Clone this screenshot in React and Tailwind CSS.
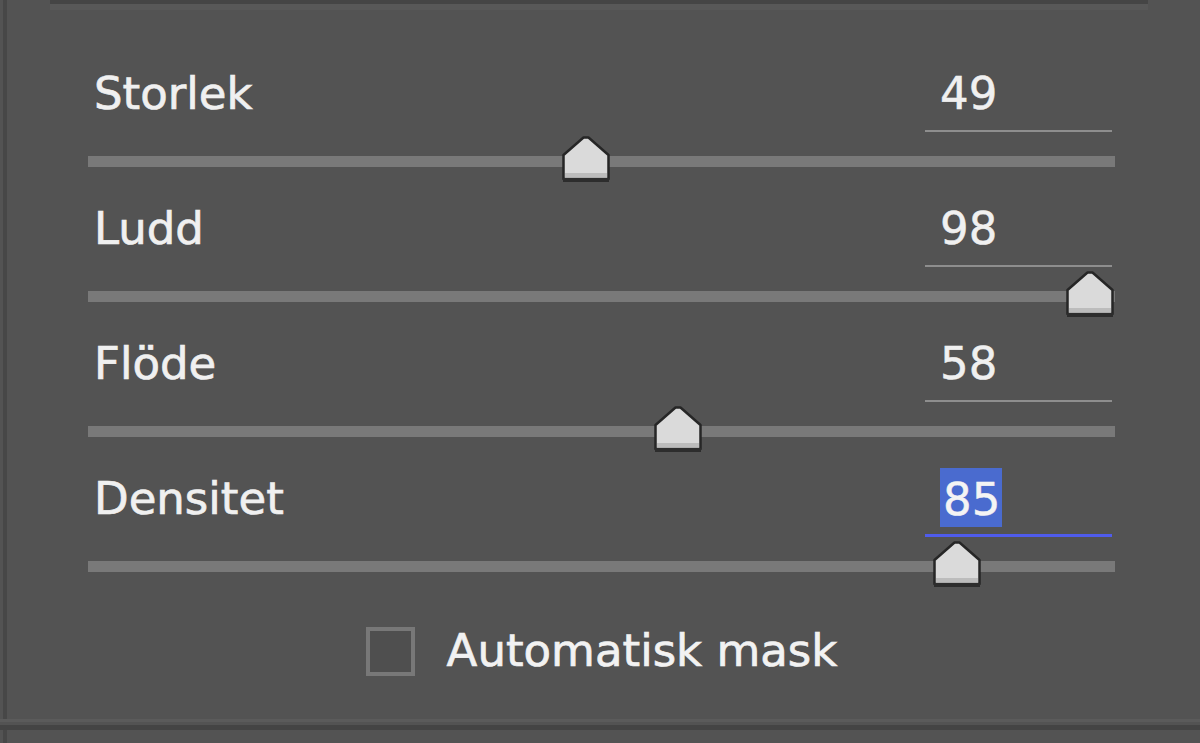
import React from "react";

const sliders = [
  { label: "Storlek", value: 49 },
  { label: "Ludd", value: 98 },
  { label: "Flöde", value: 58 },
  { label: "Densitet", value: 85, focused: true },
];

// house-shaped slider handle, like the old Photoshop sliders
const Thumb = ({ value }) => (
  <svg
    width="50"
    height="46"
    viewBox="0 0 50 46"
    className="absolute top-[-20px]"
    style={{ left: `${value * 10.3 - 32}px` }}
  >
    <polygon
      points="22.5,1.5 27.5,1.5 47.5,19 47.5,43 2.5,43 2.5,19"
      fill="#dadada"
      stroke="#262626"
      strokeWidth="2.5"
      strokeLinejoin="round"
    />
    <rect x="4" y="37" width="42" height="4" fill="#bcbcbc" />
    <rect x="2" y="42" width="46" height="4" fill="#2d2d2d" />
  </svg>
);

const SliderRow = ({ label, value, focused }) => (
  <div className="h-[135px]">
    <div className="flex items-start justify-between h-[64px]">
      <span className="ml-[6px] text-[45px] leading-[52px] text-[#f0f0f0] [-webkit-text-stroke:0.7px_#f0f0f0]">
        {label}
      </span>
      <div
        className={
          focused
            ? "w-[187px] h-[64px] mr-[3px] pl-[15px] border-b-[3px] border-[#4f5cec]"
            : "w-[187px] h-[64px] mr-[3px] pl-[15px] border-b-2 border-[#8e8e8e]"
        }
      >
        {focused ? (
          <span className="inline-block -mt-[5px] pt-[5px] pl-[3px] pr-[2px] bg-[#4a6bcf] text-[45px] leading-[54px] text-[#f4f4f4] [-webkit-text-stroke:0.5px_#f4f4f4]">
            {value}
          </span>
        ) : (
          <span className="text-[45px] leading-[52px] text-[#f0f0f0] [-webkit-text-stroke:0.5px_#f0f0f0]">
            {value}
          </span>
        )}
      </div>
    </div>
    <div className="relative mt-[24px] h-[11px] bg-[#797979]">
      <Thumb value={value} />
    </div>
  </div>
);

export default function App() {
  return (
    <div className="w-[1200px] h-[743px] bg-[#535353] flex flex-col overflow-hidden font-['DejaVu_Sans',sans-serif]">
      <div className="flex-1 ml-[3px] border-l-4 border-[#474747] flex flex-col">
        {/* bottom edge of the box above */}
        <div className="ml-[43px] w-[1098px] h-[4px] bg-[#454545]" />
        <div className="ml-[43px] w-[1098px] h-[6px] bg-[#585858]" />

        <div className="mt-[58px] ml-[81px] w-[1027px]">
          {sliders.map((s) => (
            <SliderRow key={s.label} {...s} />
          ))}

          <div className="mt-[17px] flex items-center justify-center gap-[32px]">
            <div className="w-[49px] h-[49px] border-[4px] border-[#787878] bg-[#4f4f4f]" />
            <span className="text-[45px] leading-[52px] text-[#f2f2f2] [-webkit-text-stroke:0.7px_#f2f2f2]">
              Automatisk mask
            </span>
          </div>
        </div>
      </div>
      <div className="h-[3px] bg-[#5b5b5b]" />
      <div className="h-[3px]" />
      <div className="h-[5px] bg-[#444444]" />
      <div className="h-[13px] ml-[3px] border-l-4 border-[#474747]" />
    </div>
  );
}
